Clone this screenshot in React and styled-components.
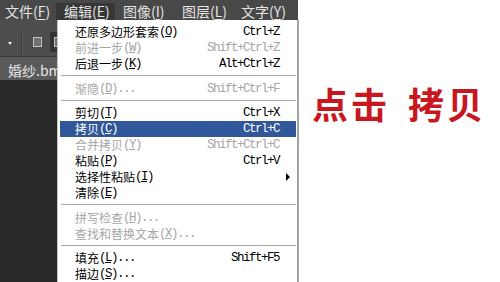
import React from "react";
import styled, { createGlobalStyle } from "styled-components";

const GlobalStyle = createGlobalStyle`
  html, body { margin: 0; padding: 0; background: #fff; overflow: hidden; }
  #root { width: 500px; height: 282px; }
  * { box-sizing: border-box; }
`;

const Screen = styled.div`
  width: 500px;
  height: 282px;
  display: flex;
  overflow: hidden;
  background: #fff;
  font-family: "Noto Sans CJK SC", "Noto Sans", sans-serif;
`;

const Workspace = styled.div`
  position: relative;
  width: 298px;
  flex: none;
  display: flex;
  flex-direction: column;
  background: #282828;
`;

const MenuBar = styled.nav`
  height: 20px;
  flex: none;
  display: flex;
  align-items: flex-end;
  background: #484848;
`;

const BarItem = styled.div`
  width: 59px;
  height: 17px;
  padding-left: 8px;
  line-height: 17px;
  font-size: 14px;
  color: #e4e4e4;
  white-space: nowrap;
  background: ${(p) => (p.$open ? "#373737" : "transparent")};
  &:first-child {
    width: 56px;
    padding-left: 5px;
  }
  u { text-underline-offset: 2px; }
`;

const OptionsBar = styled.div`
  height: 36px;
  flex: none;
  display: flex;
  align-items: center;
  padding: 8px 0 0 8px;
  background: #4d4d4d;
`;

const DropArrow = styled.span`
  width: 0;
  height: 0;
  margin-top: 2px;
  border-top: 3px solid #eeeeee;
  border-left: 2.5px solid transparent;
  border-right: 2.5px solid transparent;
`;

const ToolSeparator = styled.span`
  width: 2px;
  height: 25px;
  margin-left: 9px;
  border-left: 1px solid #3a3a3a;
  border-right: 1px solid #5c5c5c;
`;

const CheckSquare = styled.span`
  width: 9px;
  height: 10px;
  margin-left: 10px;
  border: 1px solid #c4c4c4;
  background: #707070;
`;

const Well = styled.span`
  width: 30px;
  height: 20px;
  margin-left: 8px;
  padding-left: 4px;
  display: flex;
  align-items: center;
  border-radius: 2px;
  background: #323232;
  ${CheckSquare} { margin-left: 0; }
`;

const DocTabs = styled.div`
  height: 24px;
  flex: none;
  display: flex;
  padding-top: 1px;
  background: #3a3a3a;
`;

const DocTab = styled.div`
  height: 23px;
  padding: 3px 12px 0 8px;
  line-height: 20px;
  font-size: 14px;
  color: #e6e6e6;
  white-space: nowrap;
  background: #5a5a5a;
`;

const Canvas = styled.div`
  flex: 1;
  background: #282828;
`;

const EditMenu = styled.ul`
  position: absolute;
  top: 20px;
  left: 57px;
  width: 242px;
  height: 270px;
  margin: 0;
  padding: 4px 1px 0 2px;
  list-style: none;
  background: #fff;
  border-left: 1px solid #c4c4c4;
  border-right: 2px solid #a4a4a4;
`;

const Row = styled.li`
  height: 16px;
  display: grid;
  grid-template-columns: 1fr auto 17px;
  align-items: center;
  padding-left: 15px;
  font-size: 12px;
  line-height: 16px;
  white-space: nowrap;
  color: ${(p) => (p.$active ? "#ffffff" : p.$disabled ? "#a6a6a6" : "#000000")};
  background: ${(p) => (p.$active ? "#31579b" : "transparent")};
`;

const Label = styled.span`
  height: 16px;
  display: flex;
  align-items: center;
`;

const Text = styled.span`
  display: inline-block;
  height: 16px;
  line-height: 16px;
`;

const Mono = styled.span`
  display: inline-block;
  height: 16px;
  line-height: 16px;
  font-family: "Liberation Mono", monospace;
  font-size: 12.5px;
  letter-spacing: -1.5px;
  padding-right: 1.5px;
  u { text-underline-offset: 1px; }
`;

const Shortcut = styled(Mono)`
  padding-right: 0;
`;

const SubArrow = styled.span`
  justify-self: center;
  width: 0;
  height: 0;
  border-left: 4px solid #000;
  border-top: 4px solid transparent;
  border-bottom: 4px solid transparent;
`;

const Separator = styled.li`
  height: 1px;
  margin: 3px 0 4.5px 1px;
  background: #a9a9a9;
`;

const RightPane = styled.div`
  flex: 1;
  padding: 85px 0 0 14px;
`;

const Caption = styled.div`
  display: flex;
  gap: 18px;
  font-family: "Noto Sans CJK SC", sans-serif;
  font-size: 36px;
  font-weight: 700;
  line-height: 36px;
  letter-spacing: 3px;
  color: #c8171e;
`;

const bar = [
  { label: "文件", key: "F" },
  { label: "编辑", key: "E", open: true },
  { label: "图像", key: "I" },
  { label: "图层", key: "L" },
  { label: "文字", key: "Y" },
];

const items = [
  { label: "还原多边形套索", key: "O", shortcut: "Ctrl+Z" },
  { label: "前进一步", key: "W", shortcut: "Shift+Ctrl+Z", disabled: true },
  { label: "后退一步", key: "K", shortcut: "Alt+Ctrl+Z" },
  "sep",
  { label: "渐隐", key: "D", dots: true, shortcut: "Shift+Ctrl+F", disabled: true },
  "sep",
  { label: "剪切", key: "T", shortcut: "Ctrl+X" },
  { label: "拷贝", key: "C", shortcut: "Ctrl+C", active: true },
  { label: "合并拷贝", key: "Y", shortcut: "Shift+Ctrl+C", disabled: true },
  { label: "粘贴", key: "P", shortcut: "Ctrl+V" },
  { label: "选择性粘贴", key: "I", submenu: true },
  { label: "清除", key: "E" },
  "sep",
  { label: "拼写检查", key: "H", dots: true, disabled: true },
  { label: "查找和替换文本", key: "X", dots: true, disabled: true },
  "sep",
  { label: "填充", key: "L", dots: true, shortcut: "Shift+F5" },
  { label: "描边", key: "S", dots: true },
];

export default function App() {
  return (
    <>
      <GlobalStyle />
      <Screen>
        <Workspace>
          <MenuBar>
            {bar.map((b) => (
              <BarItem key={b.label} $open={b.open}>
                {b.label}(<u>{b.key}</u>)
              </BarItem>
            ))}
          </MenuBar>
          <OptionsBar>
            <DropArrow />
            <ToolSeparator />
            <CheckSquare />
            <Well>
              <CheckSquare />
            </Well>
          </OptionsBar>
          <DocTabs>
            <DocTab>婚纱.bmp</DocTab>
          </DocTabs>
          <Canvas />
          <EditMenu>
            {items.map((it, i) =>
              it === "sep" ? (
                <Separator key={i} />
              ) : (
                <Row key={i} $disabled={it.disabled} $active={it.active}>
                  <Label>
                    <Text>{it.label}</Text>
                    <Mono>
                      (<u>{it.key}</u>){it.dots ? "..." : ""}
                    </Mono>
                  </Label>
                  {it.shortcut ? <Shortcut>{it.shortcut}</Shortcut> : <span />}
                  {it.submenu ? <SubArrow /> : <span />}
                </Row>
              )
            )}
          </EditMenu>
        </Workspace>
        <RightPane>
          <Caption>
            <span>点击</span>
            <span>拷贝</span>
          </Caption>
        </RightPane>
      </Screen>
    </>
  );
}
